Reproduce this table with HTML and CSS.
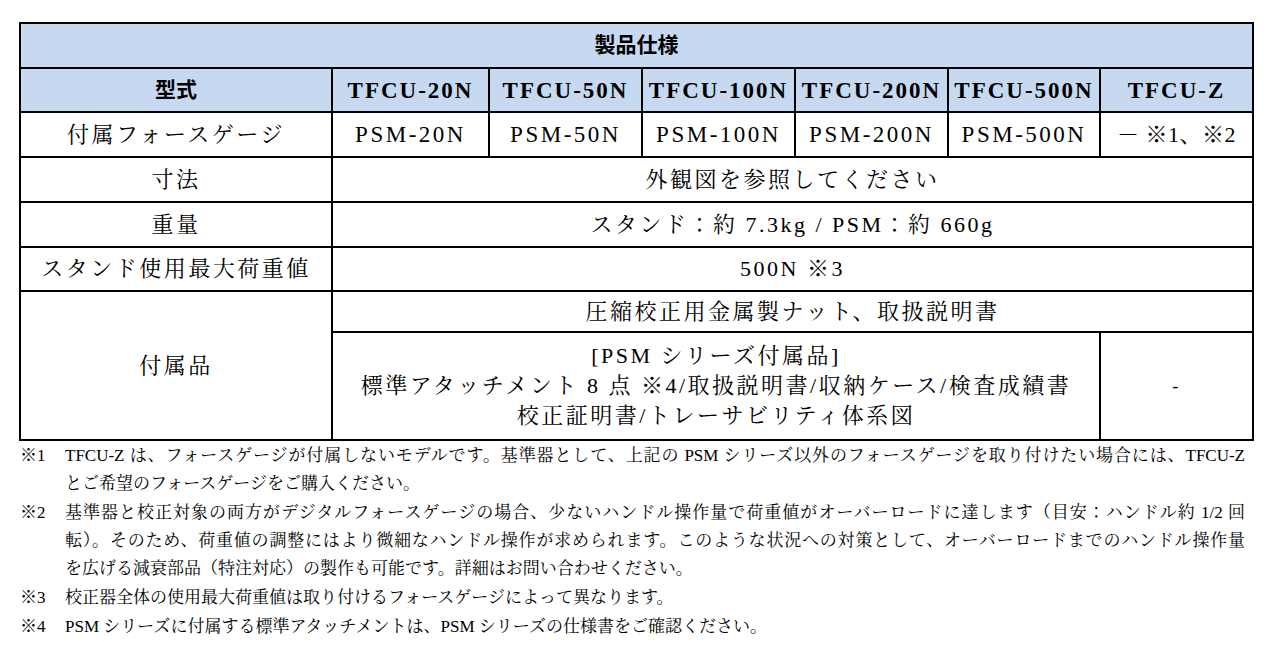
FILE: index.html
```html
<!DOCTYPE html>
<html lang="ja">
<head>
<meta charset="utf-8">
<title>製品仕様</title>
<link rel="stylesheet" href="styles.css">
</head>
<body>
<div class="page">
  <div class="spec">
    <div class="cell head span-all">製品仕様</div>

    <div class="cell head">型式</div>
    <div class="cell head model">TFCU-20N</div>
    <div class="cell head model">TFCU-50N</div>
    <div class="cell head model">TFCU-100N</div>
    <div class="cell head model">TFCU-200N</div>
    <div class="cell head model">TFCU-500N</div>
    <div class="cell head model">TFCU-Z</div>

    <div class="cell">付属フォースゲージ</div>
    <div class="cell latin">PSM-20N</div>
    <div class="cell latin">PSM-50N</div>
    <div class="cell latin">PSM-100N</div>
    <div class="cell latin">PSM-200N</div>
    <div class="cell latin">PSM-500N</div>
    <div class="cell tight">－ ※1、※2</div>

    <div class="cell">寸法</div>
    <div class="cell span-6">外観図を参照してください</div>

    <div class="cell">重量</div>
    <div class="cell span-6">スタンド：約 7.3kg / PSM：約 660g</div>

    <div class="cell">スタンド使用最大荷重値</div>
    <div class="cell span-6">500N ※3</div>

    <div class="cell rows-2">付属品</div>
    <div class="cell span-6">圧縮校正用金属製ナット、取扱説明書</div>
    <div class="cell span-5 multi">
      <span>[PSM シリーズ付属品]</span>
      <span>標準アタッチメント 8 点 ※4/取扱説明書/収納ケース/検査成績書</span>
      <span>校正証明書/トレーサビリティ体系図</span>
    </div>
    <div class="cell dash">-</div>
  </div>

  <div class="notes">
    <div class="note">
      <span class="mark">※1</span>
      <div class="body">
        <span class="line full">TFCU-Z は、フォースゲージが付属しないモデルです。基準器として、上記の PSM シリーズ以外のフォースゲージを取り付けたい場合には、TFCU-Z</span>
        <span class="line">とご希望のフォースゲージをご購入ください。</span>
      </div>
    </div>
    <div class="note">
      <span class="mark">※2</span>
      <div class="body">
        <span class="line full">基準器と校正対象の両方がデジタルフォースゲージの場合、少ないハンドル操作量で荷重値がオーバーロードに達します（目安：ハンドル約 1/2 回</span>
        <span class="line full">転）。そのため、荷重値の調整にはより微細なハンドル操作が求められます。このような状況への対策として、オーバーロードまでのハンドル操作量</span>
        <span class="line">を広げる減衰部品（特注対応）の製作も可能です。詳細はお問い合わせください。</span>
      </div>
    </div>
    <div class="note">
      <span class="mark">※3</span>
      <div class="body">
        <span class="line">校正器全体の使用最大荷重値は取り付けるフォースゲージによって異なります。</span>
      </div>
    </div>
    <div class="note">
      <span class="mark">※4</span>
      <div class="body">
        <span class="line">PSM シリーズに付属する標準アタッチメントは、PSM シリーズの仕様書をご確認ください。</span>
      </div>
    </div>
  </div>
</div>
</body>
</html>
```

FILE: styles.css
```css
html, body {
  margin: 0;
  padding: 0;
  background: #ffffff;
}

body {
  font-family: "Liberation Serif", "Noto Serif CJK JP", "Noto Sans CJK JP", serif;
  color: #000;
}

.page {
  padding: 22px 0 0 19px;
}

.spec {
  display: grid;
  width: max-content;
  grid-template-columns: 310px 155px 151px 151px 151px 150px 151px;
  grid-template-rows: 43px 42px 43px 43px 43px 42px 39px 106px;
  gap: 2px;
  padding: 2px;
  background: #000;
}

.cell {
  background: #ffffff;
  display: flex;
  align-items: center;
  justify-content: center;
  font-size: 22px;
  letter-spacing: 2.5px;
  line-height: 1;
  white-space: nowrap;
}

.cell.latin {
  font-size: 23px;
  letter-spacing: 2.5px;
}

.head {
  background: #c6d9f1;
  font-weight: bold;
  font-family: "Liberation Serif", "Noto Sans CJK JP", sans-serif;
  font-size: 21px;
  letter-spacing: 0;
}

.head.model {
  font-size: 23px;
  letter-spacing: 2px;
}

.span-all { grid-column: 1 / -1; }
.span-6 { grid-column: 2 / span 6; }
.span-5 { grid-column: 2 / span 5; }
.rows-2 { grid-row: 7 / span 2; }

.tight {
  letter-spacing: 0.5px;
  font-size: 22px;
}

.multi {
  flex-direction: column;
  line-height: 30px;
}

.dash {
  font-size: 18px;
}

.notes {
  width: 1226px;
  padding-top: 1px;
  font-size: 17px;
  line-height: 28px;
}

.note {
  display: flex;
  margin-bottom: 1px;
}

.mark {
  width: 45px;
  flex: none;
  padding-left: 1px;
}

.body {
  flex: 1;
}

.line {
  display: block;
  white-space: nowrap;
}

.line.full {
  text-align: justify;
  text-align-last: justify;
  white-space: normal;
}
```
